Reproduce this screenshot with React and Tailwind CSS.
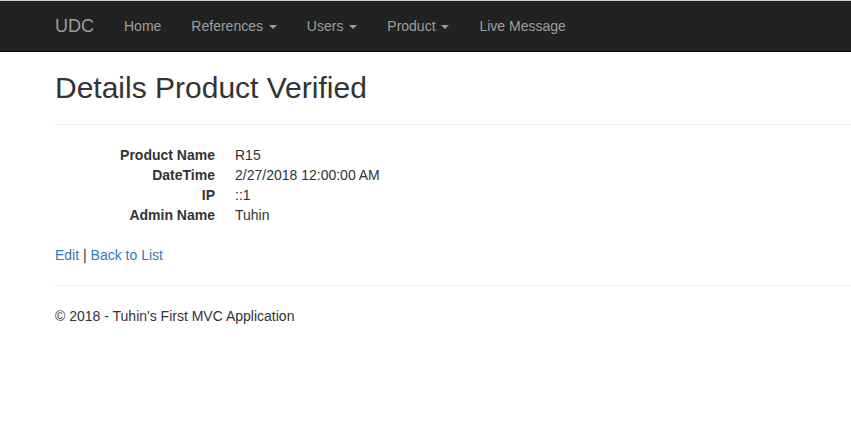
import React from 'react';

const Caret = () => (
  <span className="ml-[2px] inline-block h-0 w-0 border-x-[4px] border-t-[4px] border-x-transparent border-t-current align-middle" />
);

const NavItem = ({ label, dropdown }) => (
  <li>
    <a href="#" className="block px-[15px] py-[15px] leading-5 text-[#9d9d9d] hover:text-white">
      {label}
      {dropdown && (
        <>
          {' '}
          <Caret />
        </>
      )}
    </a>
  </li>
);

const rows = [
  ['Product Name', 'R15'],
  ['DateTime', '2/27/2018 12:00:00 AM'],
  ['IP', '::1'],
  ['Admin Name', 'Tuhin'],
];

export default function App() {
  return (
    <div
      className="min-h-[440px] bg-white text-[14px] leading-5 text-[#333]"
      style={{ fontFamily: '"Liberation Sans", Arial, sans-serif' }}
    >
      {/* navbar */}
      <div className="border-t border-t-[#cfcfcf] border-b border-b-[#080808] bg-[#222]">
        <div className="flex h-[50px] items-stretch pl-10">
          <a href="#" className="block px-[15px] py-[15px] text-[18px] leading-5 text-[#9d9d9d]">
            UDC
          </a>
          <ul className="flex">
            <NavItem label="Home" />
            <NavItem label="References" dropdown />
            <NavItem label="Users" dropdown />
            <NavItem label="Product" dropdown />
            <NavItem label="Live Message" />
          </ul>
        </div>
      </div>

      {/* body */}
      <div className="pl-[55px]">
        <h2 className="mt-[19px] mb-[10px] text-[30px] leading-[33px] font-normal text-[#333]">
          Details Product Verified
        </h2>
        <hr className="my-5 border-t border-[#eee]" />
        <dl className="mb-5">
          {rows.map(([k, v]) => (
            <div key={k} className="flex">
              <dt className="w-[160px] text-right font-bold">{k}</dt>
              <dd className="ml-5">{v}</dd>
            </div>
          ))}
        </dl>
        <p>
          <a href="#" className="text-[#337ab7]">Edit</a> |{' '}
          <a href="#" className="text-[#337ab7]">Back to List</a>
        </p>
        <hr className="mt-5 mb-5 border-t border-[#eee]" />
        <footer>
          <p>© 2018 - Tuhin's First MVC Application</p>
        </footer>
      </div>
    </div>
  );
}
